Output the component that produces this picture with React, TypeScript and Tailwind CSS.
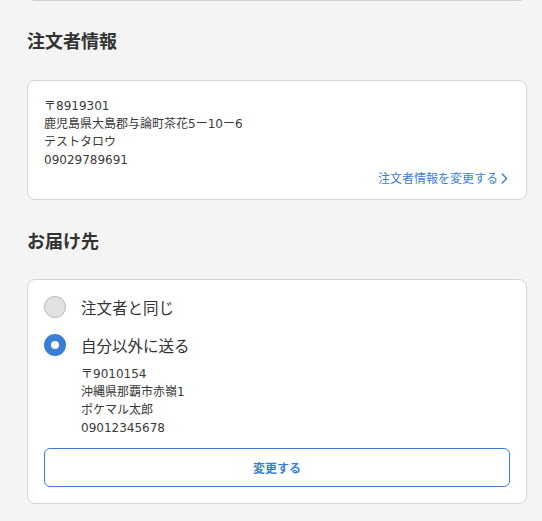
import React from "react";

const BLUE = "text-[#3a7fd5]";

export default function App() {
  return (
    <div
      className="min-h-[521px] w-[542px] overflow-hidden bg-[#f4f4f4] text-[#333333]"
      style={{ fontFamily: '"Noto Sans CJK JP", sans-serif' }}
    >
      {/* previous card bottom edge */}
      <div className="ml-[27px] -mt-[9px] h-[10px] w-[500px] rounded-b-lg border-x border-b border-[#cfcfcf] bg-white" />

      <h2 className="ml-[27px] mt-[27px] mb-[28px] text-[18px] font-bold leading-[24px] text-[#333333]">
        注文者情報
      </h2>

      <div className="ml-[27px] w-[500px] rounded-lg border border-[#d6d6d6] bg-white px-[16px] pt-[16px] pb-[12px]">
        <div
          className="text-[12px] leading-[18px] text-[#3a3a3a]"
          style={{ fontFamily: '"DejaVu Sans", "Noto Sans CJK JP", sans-serif' }}
        >
          <div>〒8919301</div>
          <div>鹿児島県大島郡与論町茶花5ー10ー6</div>
          <div>テストタロウ</div>
          <div>09029789691</div>
        </div>
        <div className="flex h-[18px] items-center justify-end pr-[2px]">
          <span className={`text-[12px] leading-[18px] ${BLUE}`}>注文者情報を変更する</span>
          <svg width="7" height="11" viewBox="0 0 7 11" className="ml-[3px]" fill="none">
            <path d="M1.2 1 L5.6 5.5 L1.2 10" stroke="#3a7fd5" strokeWidth="1.4" strokeLinecap="round" strokeLinejoin="round" />
          </svg>
        </div>
      </div>

      <h2 className="ml-[27px] mt-[28px] mb-[27px] text-[18px] font-bold leading-[24px] text-[#333333]">
        お届け先
      </h2>

      <div className="ml-[27px] w-[500px] rounded-lg border border-[#d6d6d6] bg-white px-[16px] pt-[16px] pb-[16px]">
        <div className="flex h-[22px] items-center">
          <span className="h-[22px] w-[22px] rounded-full border border-[#b8b8b8] bg-[#e2e2e2]" />
          <span className="ml-[15px] text-[15.5px] leading-[22px] text-[#333333]">注文者と同じ</span>
        </div>
        <div className="mt-[16px] flex h-[22px] items-center">
          <span className="h-[22px] w-[22px] rounded-full border-[7px] border-[#3a7fd5] bg-white" />
          <span className="ml-[15px] text-[15.5px] leading-[22px] text-[#333333]">自分以外に送る</span>
        </div>
        <div
          className="ml-[37px] mt-[9px] text-[12px] leading-[18px] text-[#3a3a3a]"
          style={{ fontFamily: '"DejaVu Sans", "Noto Sans CJK JP", sans-serif' }}
        >
          <div>〒9010154</div>
          <div>沖縄県那覇市赤嶺1</div>
          <div>ポケマル太郎</div>
          <div>09012345678</div>
        </div>
        <button
          type="button"
          className={`mt-[11px] flex h-[39px] w-full items-center justify-center rounded-[6px] border border-[#3a7fd5] bg-white text-[12px] font-bold ${BLUE}`}
          style={{ fontFamily: '"Noto Sans CJK JP", sans-serif' }}
        >
          変更する
        </button>
      </div>
    </div>
  );
}
